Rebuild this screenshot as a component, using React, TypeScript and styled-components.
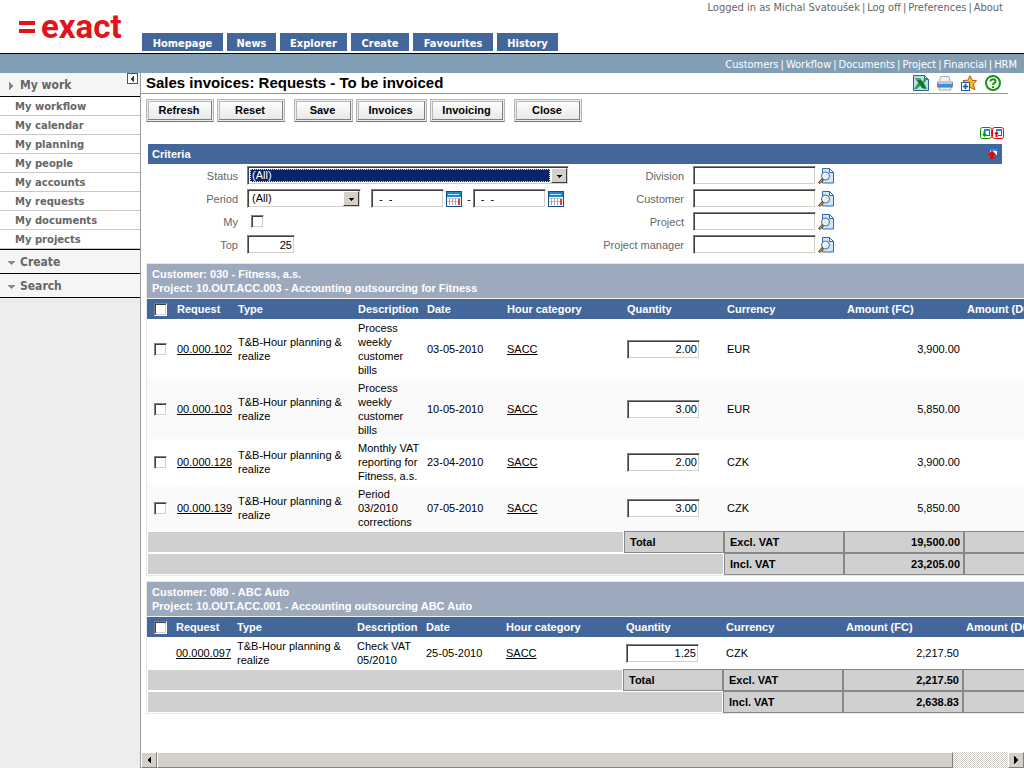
import React from "react";
import styled, { createGlobalStyle, css } from "styled-components";

const blue = "#44679b";
const sans = `"Liberation Sans", Arial, sans-serif`;
const ui = `"DejaVu Sans Condensed", Tahoma, sans-serif`;
const wide = `"DejaVu Sans", Verdana, sans-serif`;

const GlobalStyle = createGlobalStyle`
  * { box-sizing: border-box; }
  body { margin: 0; background: #fff; font: 11px/14px ${sans}; color: #000; }
  a { color: inherit; }
  h1, h2, ul { margin: 0; padding: 0; font-size: inherit; }
  button, input, select { font-family: ${sans}; font-size: 11px; margin: 0; }
  svg { display: block; }
`;

const inset = css`
  border: 1px solid;
  border-color: #808080 #fff #fff #808080;
  box-shadow: inset 1px 1px #404040, inset -1px -1px #d4d0c8;
  background: #fff;
`;
const raised = css`
  border: 1px solid;
  border-color: #fff #808080 #808080 #fff;
  background: #d4d0c8;
`;

const Page = styled.div`
  min-height: 100vh;
  display: flex;
  flex-direction: column;
`;
const Header = styled.header`
  display: flex;
  height: 54px;
  border-bottom: 1px solid #000;
`;
const Logo = styled.div`
  flex: 0 0 142px;
  display: flex;
  align-items: center;
  gap: 6px;
  padding-left: 19px;
  font: bold 33px/48px Roboto, ${sans};
  color: #e2131d;
`;
const Tabs = styled.nav`
  display: flex;
  gap: 4px;
  align-items: flex-end;
  padding-bottom: 2px;
`;
const Tab = styled.a<{ $w: number }>`
  width: ${(p) => p.$w}px;
  background: ${blue};
  color: #fff;
  font: bold 11px/21px ${ui};
  height: 18px;
  text-align: center;
  text-decoration: none;
  white-space: nowrap;
`;
const Links = styled.nav<{ $right: number }>`
  margin-left: auto;
  padding-right: ${(p) => p.$right}px;
  display: flex;
  gap: 2px;
  font: 11px/15px ${ui};
  white-space: nowrap;
  a { text-decoration: none; }
`;
const UserLinks = styled(Links)`
  color: #666;
`;
const ModuleBar = styled.div`
  height: 19px;
  display: flex;
  align-items: center;
  padding-top: 2px;
  background: #829eb5;
  color: #fff;
`;
const Body = styled.div`
  flex: 1;
  display: flex;
`;
const Sidebar = styled.aside`
  position: relative;
  flex: 0 0 141px;
  background: #ededed;
  border-right: 1px solid #999;
  color: #666;
`;
const Collapse = styled.button`
  position: absolute;
  top: 0;
  right: 2px;
  width: 11px;
  height: 11px;
  padding: 0;
  border: 1px solid #4a5268;
  background: #fff;
`;
const SideHead = styled.h2`
  display: flex;
  align-items: center;
  height: 24px;
  padding: 2px 0 0 7px;
  gap: 5px;
  background: #f5f5f5;
  border-bottom: 1px solid #000;
  font: bold 12px/21px ${ui};
`;
const SideList = styled.ul`
  list-style: none;
  background: #fff;
  border-bottom: 1px solid #000;
`;
const SideItem = styled.li`
  height: 19px;
  padding-left: 15px;
  border-bottom: 1px solid #c8c8c8;
  font: bold 10px/19px ${wide};
  a { text-decoration: none; }
`;
const Main = styled.main`
  flex: 1;
  min-width: 0;
  display: flex;
  flex-direction: column;
`;
const TitleBar = styled.div`
  display: flex;
  align-items: center;
  justify-content: space-between;
  height: 21px;
  margin-right: 16px;
  padding: 0 7px 0 5px;
  border-bottom: 1px solid #999;
`;
const Title = styled.h1`
  font: bold 15px/20px ${sans};
`;
const IconRow = styled.div<{ $gap: number }>`
  display: flex;
  gap: ${(p) => p.$gap}px;
`;
const IconButton = styled.button`
  padding: 0;
  border: 0;
  background: none;
  display: block;
`;
const Toolbar = styled.div`
  display: flex;
  gap: 9px;
  padding: 5px 5px;
`;
const ToolGroup = styled.div`
  display: flex;
  gap: 3px;
`;
const ToolButton = styled.button<{ $w: number }>`
  width: ${(p) => p.$w}px;
  height: 23px;
  padding: 0 2px 2px 0;
  border: 1px solid;
  border-color: #b5b5b5 #b5b5b5 #777;
  box-shadow: inset 0 0 0 1px #ececec, inset -2px -2px #808080, inset 2px 2px #b8b8b8;
  background: linear-gradient(#fff, #e6e6e6);
  font-weight: bold;
`;
const FoldTools = styled.div`
  display: flex;
  justify-content: flex-end;
  padding: 0 20px 5px 0;
`;
const CriteriaBar = styled.div`
  display: flex;
  justify-content: space-between;
  align-items: center;
  height: 20px;
  margin: 0 22px 0 7px;
  padding: 0 4px;
  background: ${blue};
  color: #fff;
  font-weight: bold;
`;
const CriteriaGrid = styled.form`
  display: grid;
  grid-template-columns: 421px 1fr;
  margin: 2px 22px 9px 7px;
`;
const Fields = styled.div`
  display: flex;
  flex-direction: column;
  gap: 4px;
`;
const Field = styled.div<{ $label: number }>`
  display: grid;
  grid-template-columns: ${(p) => p.$label}px auto;
  justify-content: start;
  column-gap: 9px;
  align-items: center;
  height: 19px;
  color: #666;
  > label { text-align: right; }
`;
const Controls = styled.div`
  display: flex;
  align-items: center;
  gap: 2px;
  color: #000;
`;
const TextBox = styled.input<{ $w: number; $end?: boolean }>`
  ${inset}
  width: ${(p) => p.$w}px;
  height: 19px;
  padding: 1px 2px 1px 7px;
  text-align: ${(p) => (p.$end ? "right" : "left")};
  display: block;
`;
const Check = styled.input`
  ${inset}
  appearance: none;
  display: block;
  width: 13px;
  height: 13px;
  &:checked { background: #404040; }
`;
const MyCheck = styled(Check)`
  margin-left: 4px;
`;
const SelectBox = styled.span<{ $w: number }>`
  ${inset}
  display: flex;
  width: ${(p) => p.$w}px;
  height: 19px;
  padding: 1px;
`;
const Select = styled.select<{ $active?: boolean }>`
  appearance: none;
  flex: 1;
  min-width: 0;
  margin: 1px;
  padding: 0 2px;
  border: 0;
  border-radius: 0;
  line-height: 13px;
  background: ${(p) => (p.$active ? "#0a246a" : "#fff")};
  color: ${(p) => (p.$active ? "#fff" : "#000")};
  outline: ${(p) => (p.$active ? "1px dotted #f5db95" : "none")};
  outline-offset: -1px;
`;
const SelectArrow = styled.span`
  flex: 0 0 16px;
  display: flex;
  align-items: center;
  justify-content: center;
  ${raised}
  border-right-color: #404040;
  border-bottom-color: #404040;
`;
const DateRange = styled.div`
  display: flex;
  align-items: center;
  gap: 2px;
  margin-left: 8px;
`;
const Viewport = styled.div`
  flex: 1;
  overflow: hidden;
  padding-left: 5px;
`;
const Group = styled.section`
  width: 100%;
  min-width: 939px;
  margin-bottom: 5px;
  border: 1px solid #e8e8e8;
`;
const GroupHead = styled.h2`
  padding: 3px 5px;
  background: #9da9bd;
  border-bottom: 1px solid #f0f0f0;
  color: #fff;
  font: bold 11px/14px ${sans};
`;
const Table = styled.table`
  width: 100%;
  table-layout: fixed;
  border-collapse: separate;
  border-spacing: 0;
`;
const Col = styled.col<{ $w?: number }>`
  width: ${(p) => (p.$w ? `${p.$w}px` : "auto")};
`;
const Th = styled.th`
  height: 20px;
  padding: 0 3px;
  background: ${blue};
  color: #fff;
  text-align: left;
  white-space: nowrap;
  &:first-child { padding-left: 7px; }
`;
const Row = styled.tr`
  &:nth-child(even) td { background: #fafafa; }
`;
const Td = styled.td<{ $end?: boolean }>`
  padding: 2px 4px 2px 3px;
  text-align: ${(p) => (p.$end ? "right" : "left")};
  &:first-child { padding-left: 7px; }
`;
const Filler = styled.td`
  height: 22px;
  background: #d0d0d0;
  border: 1px solid #fff;
`;
const SumCell = styled.td<{ $end?: boolean }>`
  height: 22px;
  padding: 0 3px 0 5px;
  background: #d0d0d0;
  border: 1px solid #888;
  font-weight: bold;
  text-align: ${(p) => (p.$end ? "right" : "left")};
`;
const ScrollBar = styled.div`
  display: flex;
  height: 16px;
  background: repeating-conic-gradient(#d4d0c8 0 25%, #fff 0 50%) 0 0 / 2px 2px;
`;
const ScrollButton = styled.button`
  ${raised}
  flex: 0 0 16px;
  padding: 0;
  display: flex;
  align-items: center;
  justify-content: center;
`;
const ScrollTrack = styled.div`
  flex: 1;
`;
const Thumb = styled.div`
  ${raised}
  width: 93.5%;
  height: 16px;
`;

const Tri = ({ d, fill = "#000", w = 8, h = 8 }: { d: string; fill?: string; w?: number; h?: number }) => (
  <svg width={w} height={h} viewBox={`0 0 ${w} ${h}`}>
    <path d={d} fill={fill} shapeRendering="crispEdges" />
  </svg>
);

const ExcelIcon = () => (
  <svg width="16" height="16" viewBox="0 0 16 16">
    <path d="M.5.5h11l4 4v11H.5z" fill="#b9dcf8" stroke="#2b5f9e" />
    <path d="M11.5.5v4h4z" fill="#fff" stroke="#2b5f9e" />
    <path d="M9 7l3-4h3l-4 5 3 6h-4z" fill="#2fa53c" />
    <path d="M5 8l3 2-4 4H1z" fill="#2fa53c" />
    <path d="M2 3h5l6 10H9z" fill="#127524" />
    <path d="M2 3h5l1 2H3z" fill="#3db54a" />
  </svg>
);
const PrintIcon = () => (
  <svg width="16" height="16" viewBox="0 0 16 16">
    <path d="M3.500 1.500h8.500l1 5H2.500z" fill="#eef1f6" stroke="#a6adba" />
    <rect x="0" y="6" width="16" height="7" rx="2" fill="#7e858f" />
    <rect x="1" y="6" width="14" height="3" rx="1" fill="#c3c8d0" />
    <rect x="2" y="9" width="12" height="3" fill="#3f8fe0" />
    <path d="M2.500 12.500h11l.5 2.500H2z" fill="#eef1f6" stroke="#a6adba" />
  </svg>
);
const StarIcon = () => (
  <svg width="16" height="16" viewBox="0 0 16 16">
    <path d="M9 .7l2 4.5 4.6.4-3.3 3.4 1.6 5.8L9 12.3l-4.6 2.4 1-5.3L2 5.6l4.8-.4z" fill="#fbb62a" stroke="#a86408" strokeWidth="1" />
    <rect x=".5" y="7.500" width="8" height="8" fill="#fff" stroke="#1d5fae" />
    <path d="M4 9h1v2h2v1H5v2H4v-2H2v-1h2z" fill="#1d5fae" stroke="#1d5fae" strokeWidth=".7" />
  </svg>
);
const HelpIcon = () => (
  <svg width="16" height="16" viewBox="0 0 16 16" fill="none">
    <circle cx="8" cy="8" r="7" fill="#fff" stroke="#149314" strokeWidth="2" />
    <path d="M5.500 6.500C5.500 3.500 10.500 3.500 10.500 6.200 10.500 8 8 7.800 8 10M8 11.200v1.800" stroke="#149314" strokeWidth="2" />
  </svg>
);
const FoldIcon = ({ up }: { up?: boolean }) => {
  const c = up ? "#f00000" : "#0a8f0a";
  return (
    <svg width="12" height="12" viewBox="0 0 12 12">
      <rect x=".5" y=".5" width="11" height="11" rx="2" fill="#fff" stroke={c} />
      <path d="M9 3h1v6H6V8h3z" fill="#555" />
      <path d="M4 2h6v2H4z" fill="#1d8de0" />
      <path d={up ? "M4.500 4L7 7H5.500v3H3.500V7H2z" : "M4.500 10L7 7H5.500V4H3.500v3H2z"} fill={c} />
    </svg>
  );
};
const HideIcon = () => (
  <svg width="10" height="10" viewBox="0 0 10 10">
    <path d="M2 0h7v6H2z" fill="#fff" />
    <path d="M2 0h7v2H2z" fill="#1d9df0" />
    <path d="M4 1.500L8 5.500V6H5.500v4h-3V6H0v-.5z" fill="#f00000" />
  </svg>
);
const CalendarIcon = () => (
  <svg width="16" height="16" viewBox="0 0 16 16">
    <rect width="16" height="16" fill="#0d4f88" />
    <path d="M1 1h14v5H1z" fill="#1f86d0" />
    <path d="M2 3h11v1H2z" fill="#bfe2fa" />
    <path d="M1 6h14v9H1z" fill="#fff" />
    <path d="M1 7.500h14M1 10.500h11" stroke="#c4c4c8" fill="none" />
    <path d="M3.500 8v6M6.500 8v6M9.500 8v6" stroke="#d58f8f" fill="none" />
    <path d="M12 8h2v6h-2z" fill="#e03a3a" />
  </svg>
);
const LookupIcon = () => (
  <svg width="16" height="16" viewBox="0 0 16 16">
    <path d="M4.500.5h7l4 4v10.500H4.500z" fill="#cfe5fb" stroke="#2a6cb0" />
    <path d="M11.500.5v4h4z" fill="#fff" stroke="#2a6cb0" />
    <circle cx="7.500" cy="8" r="4" fill="#e3f1fd" stroke="#5d6b7c" />
    <path d="M5.500 7.500q.5-2 2.500-2" stroke="#fff" fill="none" />
    <path d="M.5 14.500l3.500-4 1.500 1.500L2 15.500z" fill="#f08a24" stroke="#3c1c04" strokeWidth=".8" />
  </svg>
);

const tabs: [string, number][] = [["Homepage", 81], ["News", 49], ["Explorer", 67], ["Create", 58], ["Favourites", 80], ["History", 61]];
const modules = ["Customers", "Workflow", "Documents", "Project", "Financial", "HRM"];
const sideItems = ["My workflow", "My calendar", "My planning", "My people", "My accounts", "My requests", "My documents", "My projects"];
const toolGroups: [string, number][][] = [
  [["Refresh", 68], ["Reset", 68]],
  [["Save", 59], ["Invoices", 71], ["Invoicing", 75]],
  [["Close", 68]],
];
const lookups = ["Division", "Customer", "Project", "Project manager"];
const heads = ["Request", "Type", "Description", "Date", "Hour category", "Quantity", "Currency", "Amount (FC)", "Amount (DC)"];
const widths = [61, 120, 69, 80, 120, 100, 120, 120];

type Line = { id: string; text: string; date: string; qty: string; cur: string; amount: string };
type GroupData = { customer: string; project: string; selectable: boolean; lines: Line[]; excl: string; incl: string };

const groups: GroupData[] = [
  {
    customer: "030 - Fitness, a.s.",
    project: "10.OUT.ACC.003 - Accounting outsourcing for Fitness",
    selectable: true,
    lines: [
      { id: "00.000.102", text: "Process weekly customer bills", date: "03-05-2010", qty: "2.00", cur: "EUR", amount: "3,900.00" },
      { id: "00.000.103", text: "Process weekly customer bills", date: "10-05-2010", qty: "3.00", cur: "EUR", amount: "5,850.00" },
      { id: "00.000.128", text: "Monthly VAT reporting for Fitness, a.s.", date: "23-04-2010", qty: "2.00", cur: "CZK", amount: "3,900.00" },
      { id: "00.000.139", text: "Period 03/2010 corrections", date: "07-05-2010", qty: "3.00", cur: "CZK", amount: "5,850.00" },
    ],
    excl: "19,500.00",
    incl: "23,205.00",
  },
  {
    customer: "080 - ABC Auto",
    project: "10.OUT.ACC.001 - Accounting outsourcing ABC Auto",
    selectable: false,
    lines: [{ id: "00.000.097", text: "Check VAT 05/2010", date: "25-05-2010", qty: "1.25", cur: "CZK", amount: "2,217.50" }],
    excl: "2,217.50",
    incl: "2,638.83",
  },
];

const Separated = ({ items }: { items: string[] }) => (
  <>
    {items.map((t, i) => (
      <React.Fragment key={t}>
        {i > 0 && <span>|</span>}
        <a href="#">{t}</a>
      </React.Fragment>
    ))}
  </>
);

const InvoiceGroup = ({ g }: { g: GroupData }) => (
  <Group>
    <GroupHead>
      Customer: {g.customer}
      <br />
      Project: {g.project}
    </GroupHead>
    <Table>
      <colgroup>
        <Col $w={g.selectable ? 27 : 26} />
        {widths.map((w, i) => <Col key={i} $w={w} />)}
        <Col />
      </colgroup>
      <thead>
        <tr>
          <Th><Check type="checkbox" aria-label="Select all" /></Th>
          {heads.map((h) => <Th key={h}>{h}</Th>)}
        </tr>
      </thead>
      <tbody>
        {g.lines.map((l) => (
          <Row key={l.id}>
            <Td>{g.selectable && <Check type="checkbox" aria-label={`Select ${l.id}`} />}</Td>
            <Td><a href="#">{l.id}</a></Td>
            <Td>T&amp;B-Hour planning &amp; realize</Td>
            <Td>{l.text}</Td>
            <Td>{l.date}</Td>
            <Td><a href="#">SACC</a></Td>
            <Td><TextBox $w={73} $end defaultValue={l.qty} aria-label={`Quantity ${l.id}`} /></Td>
            <Td>{l.cur}</Td>
            <Td $end>{l.amount}</Td>
            <Td />
          </Row>
        ))}
      </tbody>
      <tfoot>
        <tr>
          <Filler colSpan={6} />
          <SumCell>Total</SumCell>
          <SumCell>Excl. VAT</SumCell>
          <SumCell $end>{g.excl}</SumCell>
          <SumCell />
        </tr>
        <tr>
          <Filler colSpan={7} />
          <SumCell>Incl. VAT</SumCell>
          <SumCell $end>{g.incl}</SumCell>
          <SumCell />
        </tr>
      </tfoot>
    </Table>
  </Group>
);

export default function App() {
  return (
    <Page>
      <GlobalStyle />
      <Header>
        <Logo>
          <svg width="16" height="12" viewBox="0 0 16 12" fill="#e2131d">
            <rect width="16" height="4" />
            <rect y="8" width="16" height="4" />
          </svg>
          exact
        </Logo>
        <Tabs>
          {tabs.map(([t, w]) => <Tab key={t} href="#" $w={w}>{t}</Tab>)}
        </Tabs>
        <UserLinks $right={21}>
          <span>Logged in as Michal Svatoušek</span>
          <span>|</span>
          <Separated items={["Log off", "Preferences", "About"]} />
        </UserLinks>
      </Header>
      <ModuleBar>
        <Links $right={7}><Separated items={modules} /></Links>
      </ModuleBar>
      <Body>
        <Sidebar>
          <SideHead><Tri d="M2 0v8l4-4z" fill="#888" />My work</SideHead>
          <Collapse aria-label="Collapse menu"><Tri d="M6 0v8L2 4z" fill="#333a50" /></Collapse>
          <SideList>
            {sideItems.map((t) => <SideItem key={t}><a href="#">{t}</a></SideItem>)}
          </SideList>
          <SideHead><Tri d="M0 2h8L4 6z" fill="#888" />Create</SideHead>
          <SideHead><Tri d="M0 2h8L4 6z" fill="#888" />Search</SideHead>
        </Sidebar>
        <Main>
          <TitleBar>
            <Title>Sales invoices: Requests - To be invoiced</Title>
            <IconRow $gap={8}>
              <IconButton aria-label="Export to Excel"><ExcelIcon /></IconButton>
              <IconButton aria-label="Print"><PrintIcon /></IconButton>
              <IconButton aria-label="Add to favourites"><StarIcon /></IconButton>
              <IconButton aria-label="Help"><HelpIcon /></IconButton>
            </IconRow>
          </TitleBar>
          <Toolbar>
            {toolGroups.map((grp) => (
              <ToolGroup key={grp[0][0]}>
                {grp.map(([t, w]) => <ToolButton key={t} $w={w}>{t}</ToolButton>)}
              </ToolGroup>
            ))}
          </Toolbar>
          <FoldTools>
            <IconButton aria-label="Expand all"><FoldIcon /></IconButton>
            <IconButton aria-label="Collapse all"><FoldIcon up /></IconButton>
          </FoldTools>
          <CriteriaBar>
            <span>Criteria</span>
            <IconButton aria-label="Hide criteria"><HideIcon /></IconButton>
          </CriteriaBar>
          <CriteriaGrid>
            <Fields>
              <Field $label={90}>
                <label htmlFor="status">Status</label>
                <SelectBox $w={322}>
                  <Select id="status" $active><option>(All)</option></Select>
                  <SelectArrow><Tri d="M1 3h5L3.500 6z" w={7} /></SelectArrow>
                </SelectBox>
              </Field>
              <Field $label={90}>
                <label htmlFor="period">Period</label>
                <Controls>
                  <SelectBox $w={114}>
                    <Select id="period"><option>(All)</option></Select>
                    <SelectArrow><Tri d="M1 3h5L3.500 6z" w={7} /></SelectArrow>
                  </SelectBox>
                  <DateRange>
                    <TextBox $w={73} defaultValue="-  -" aria-label="From date" />
                    <IconButton type="button" aria-label="Pick from date"><CalendarIcon /></IconButton>
                    <span>&nbsp;-</span>
                    <TextBox $w={73} defaultValue="-  -" aria-label="To date" />
                    <IconButton type="button" aria-label="Pick to date"><CalendarIcon /></IconButton>
                  </DateRange>
                </Controls>
              </Field>
              <Field $label={90}>
                <label htmlFor="my">My</label>
                <MyCheck id="my" type="checkbox" />
              </Field>
              <Field $label={90}>
                <label htmlFor="top">Top</label>
                <TextBox id="top" $w={48} $end defaultValue="25" />
              </Field>
            </Fields>
            <Fields>
              {lookups.map((t) => (
                <Field key={t} $label={115}>
                  <label htmlFor={t}>{t}</label>
                  <Controls>
                    <TextBox id={t} $w={123} />
                    <IconButton type="button" aria-label={`Find ${t}`}><LookupIcon /></IconButton>
                  </Controls>
                </Field>
              ))}
            </Fields>
          </CriteriaGrid>
          <Viewport>
            {groups.map((g) => <InvoiceGroup key={g.customer} g={g} />)}
          </Viewport>
          <ScrollBar>
            <ScrollButton aria-label="Scroll left"><Tri d="M6 0v8L2 4z" /></ScrollButton>
            <ScrollTrack><Thumb /></ScrollTrack>
            <ScrollButton aria-label="Scroll right"><Tri d="M2 0v8l4-4z" /></ScrollButton>
          </ScrollBar>
        </Main>
      </Body>
    </Page>
  );
}
